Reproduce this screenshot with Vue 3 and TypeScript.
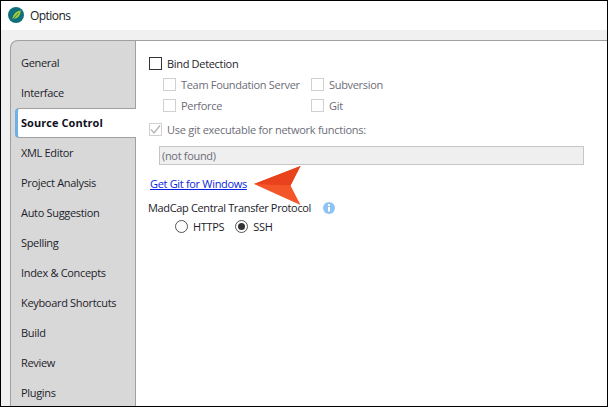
<script setup lang="ts">
const tabs: string[] = ['General', 'Interface', 'Source Control', 'XML Editor', 'Project Analysis', 'Auto Suggestion', 'Spelling', 'Index & Concepts', 'Keyboard Shortcuts', 'Build', 'Review', 'Plugins']
const active = 'Source Control'
</script>

<template>
  <div class="window">
    <header class="titlebar">
      <svg class="logo" width="16" height="16" viewBox="0 0 16 16">
        <circle cx="8" cy="8" r="8" fill="#0f6f7c" />
        <path d="M4.500 12.500C4.500 7.500 8 4 12.600 3.400C12.800 8 10 11.500 6.200 11.600L4.500 12.500Z" fill="#a6c93a" />
        <path d="M5 12L10.500 6" stroke="#0f6f7c" stroke-width="0.8" fill="none" />
      </svg>
      <span class="title">Options</span>
    </header>
    <div class="strip"></div>
    <div class="body">
      <nav class="tabs">
        <div v-for="t in tabs" :key="t" class="tab" :class="{ active: t === active }">{{ t }}</div>
      </nav>
      <main class="panel">
        <label class="row bind">
          <span class="box dark"></span>
          <span class="dark-text">Bind Detection</span>
        </label>
        <div class="grid">
          <label class="row"><span class="box"></span><span class="dim">Team Foundation Server</span></label>
          <label class="row"><span class="box"></span><span class="dim">Subversion</span></label>
          <label class="row"><span class="box"></span><span class="dim">Perforce</span></label>
          <label class="row"><span class="box"></span><span class="dim">Git</span></label>
        </div>
        <label class="row use">
          <span class="box">
            <svg width="11" height="11" viewBox="0 0 11 11"><path d="M1 5.500L4 9L10 1.500" fill="none" stroke="#b4b4b4" stroke-width="1.3" /></svg>
          </span>
          <span class="dim">Use git executable for network functions:</span>
        </label>
        <div class="input">(not found)</div>
        <a class="link">Get Git for Windows</a>
        <div class="proto">
          <span class="dark-text">MadCap Central Transfer Protocol</span>
          <svg class="info" width="12" height="12" viewBox="0 0 12 12">
            <circle cx="6" cy="6" r="6" fill="#8fc4f2" />
            <rect x="5" y="5" width="2" height="4.500" fill="#fff" />
            <rect x="5" y="2.200" width="2" height="1.800" fill="#fff" />
          </svg>
        </div>
        <div class="radios">
          <label class="row radio-row"><span class="radio"></span><span class="dark-text">HTTPS</span></label>
          <label class="row radio-row"><span class="radio on"></span><span class="dark-text">SSH</span></label>
        </div>
      </main>
    </div>
    <svg class="arrow" width="50" height="42" viewBox="0 0 50 42">
      <path d="M1 20L47.500 2L37.500 21.500L47.500 41Z" fill="#f4562a" />
      <path d="M1 20L47.500 2L37.500 21.500Z" fill="#e8431c" />
    </svg>
  </div>
</template>

<style>
html, body { margin: 0; background: #fff; }
</style>

<style scoped>
.window {
  position: relative;
  width: 608px;
  height: 407px;
  box-sizing: border-box;
  border: 1px solid #000;
  background: #fff;
  overflow: hidden;
  display: flex;
  flex-direction: column;
  font-family: "Open Sans", sans-serif;
  font-size: 11px;
  letter-spacing: -0.32px;
  color: #1d1d2b;
}
.titlebar {
  height: 29px;
  display: flex;
  align-items: center;
  padding-left: 7px;
  gap: 6px;
  flex: none;
}
.logo { margin-top: -1px; }
.title { font-size: 12px; letter-spacing: -0.55px; color: #1a1a1a; margin-top: -1px; }
.strip { height: 10px; background: #f0f0f0; flex: none; }
.body {
  flex: 1;
  display: flex;
  background: #f0f0f0;
  padding-left: 9px;
  min-height: 0;
}
.tabs {
  width: 126px;
  flex: none;
  box-sizing: border-box;
  background: #d8d8d8;
  border-left: 1px solid #a0a0a0;
  border-top: 1px solid #a0a0a0;
  border-right: 1px solid #a0a0a0;
  border-top-left-radius: 8px;
  padding-top: 7px;
}
.tab {
  height: 30px;
  line-height: 30px;
  padding-left: 10px;
  box-sizing: border-box;
  white-space: nowrap;
}
.tab.active {
  position: relative;
  margin-left: 4px;
  margin-right: -1px;
  padding-left: 3px;
  background: #fff;
  border-top: 1px solid #a0a0a0;
  border-bottom: 1px solid #a0a0a0;
  border-left: 3px solid #6cb2e8;
  border-top-left-radius: 4px;
  border-bottom-left-radius: 4px;
  font-weight: 700;
  line-height: 28px;
  letter-spacing: 0.05px;
  color: #10101c;
}
.panel {
  flex: 1;
  background: #fff;
  border-top: 1px solid #a0a0a0;
  padding: 16px 0 0 12px;
  display: flex;
  flex-direction: column;
  align-items: flex-start;
}
.row {
  display: flex;
  align-items: center;
  gap: 5px;
  height: 21px;
  white-space: nowrap;
}
.bind { height: 13px; margin-left: 1px; gap: 5px; }
.box {
  width: 11px;
  height: 11px;
  border: 1px solid #d0d0d0;
  background: #fff;
  display: flex;
  align-items: center;
  justify-content: center;
  flex: none;
}
.box.dark { border-color: #333; }
.dark-text { color: #1d1d2b; }
.dim { color: #6d6d78; }
.grid {
  display: grid;
  grid-template-columns: 148px auto;
  margin: 4px 0 0 15px;
}
.use { margin: 3px 0 0 1px; letter-spacing: -0.27px; }
.input {
  margin: 6px 0 0 11px;
  width: 425px;
  height: 19px;
  box-sizing: border-box;
  background: #efefef;
  border: 1px solid #c6c6c6;
  padding-left: 2px;
  line-height: 17px;
  color: #6d6d78;
}
.link {
  margin: 10px 0 0 2px;
  color: #0a1ee0;
  text-decoration: underline;
  line-height: 17px;
}
.proto {
  margin-top: 7px;
  display: flex;
  align-items: center;
  gap: 12px;
  height: 16px;
  letter-spacing: -0.35px;
}
.info { margin-top: 2px; }
.radios {
  display: flex;
  margin: 3px 0 0 27px;
  gap: 11px;
}
.radio-row { height: 17px; }
.radio {
  width: 11px;
  height: 11px;
  border: 1px solid #555;
  border-radius: 50%;
  background: #fff;
  position: relative;
  flex: none;
}
.radio.on::after {
  content: "";
  position: absolute;
  left: 2px;
  top: 2px;
  width: 7px;
  height: 7px;
  border-radius: 50%;
  background: #333;
}
.arrow {
  position: absolute;
  left: 252px;
  top: 163px;
}
</style>
